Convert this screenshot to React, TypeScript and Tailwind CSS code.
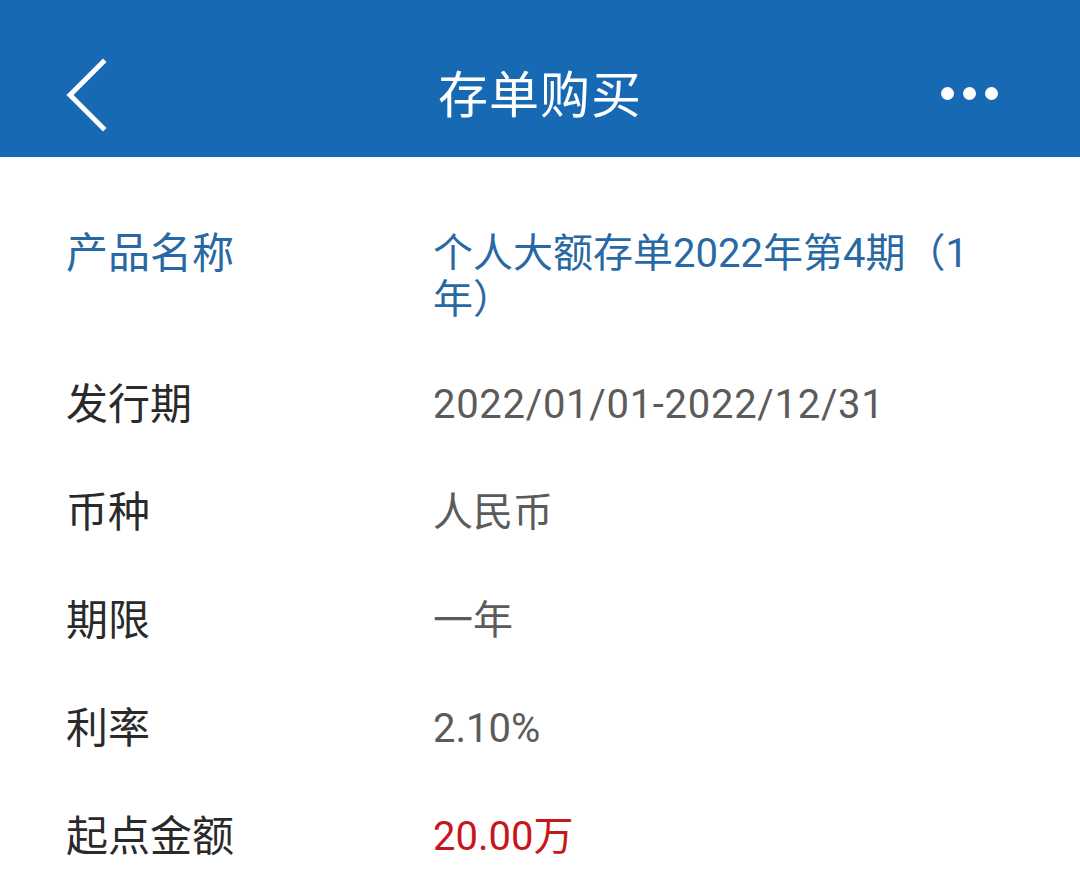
type Row = {
  label: string
  value: string
  tone?: 'link' | 'danger'
  spaced?: boolean
}

const rows: Row[] = [
  { label: '产品名称', value: '个人大额存单2022年第4期（1年）', tone: 'link' },
  { label: '发行期', value: '2022/01/01-2022/12/31', spaced: true },
  { label: '币种', value: '人民币' },
  { label: '期限', value: '一年' },
  { label: '利率', value: '2.10%' },
  { label: '起点金额', value: '20.00万', tone: 'danger' }
]

const font = { fontFamily: 'Roboto, "Noto Sans CJK SC", sans-serif' }

function BackArrow() {
  return (
    <svg
      className="absolute left-[62px] top-[22px] h-[76px] w-[50px]"
      viewBox="0 0 50 76"
      fill="none"
      stroke="currentColor"
      strokeWidth={5}
      strokeLinecap="square"
    >
      <path d="M41 5 L8 38 L41 71" />
    </svg>
  )
}

function Header() {
  return (
    <header className="h-[157px] bg-[#1769b4] pt-[35px] text-white">
      <div className="relative flex h-[122px] items-center justify-center">
        <BackArrow />
        <h1 className="text-[50px] leading-none tracking-[1px]">存单购买</h1>
        <div className="absolute right-[82px] top-[52px] flex gap-[9px]">
          <span className="h-[13px] w-[13px] rounded-full bg-white" />
          <span className="h-[13px] w-[13px] rounded-full bg-white" />
          <span className="h-[13px] w-[13px] rounded-full bg-white" />
        </div>
      </div>
    </header>
  )
}

function DetailRow({ row }: { row: Row }) {
  const labelColor = row.tone === 'link' ? 'text-[#2868a4]' : 'text-[#2a2a2a]'
  const valueColor =
    row.tone === 'link'
      ? 'text-[#2868a4]'
      : row.tone === 'danger'
        ? 'text-[#c8161d]'
        : 'text-[#5b5b5b]'

  return (
    <div className="flex items-start">
      <div className={`w-[367px] shrink-0 text-[42px] leading-[46px] ${labelColor}`}>
        {row.label}
      </div>
      <div
        className={`w-[550px] text-[40px] leading-[46px] ${valueColor} ${row.spaced ? 'tracking-[0.7px]' : ''}`}
      >
        {row.value}
      </div>
    </div>
  )
}

export default function App() {
  return (
    <div className="h-[880px] w-[1080px] overflow-hidden bg-white" style={font}>
      <Header />
      <div className="flex flex-col gap-[62px] px-[66px] pt-[74px]">
        {rows.map((row, i) => (
          <div key={row.label} className={i === 0 ? '-mb-[3px]' : ''}>
            <DetailRow row={row} />
          </div>
        ))}
      </div>
    </div>
  )
}
